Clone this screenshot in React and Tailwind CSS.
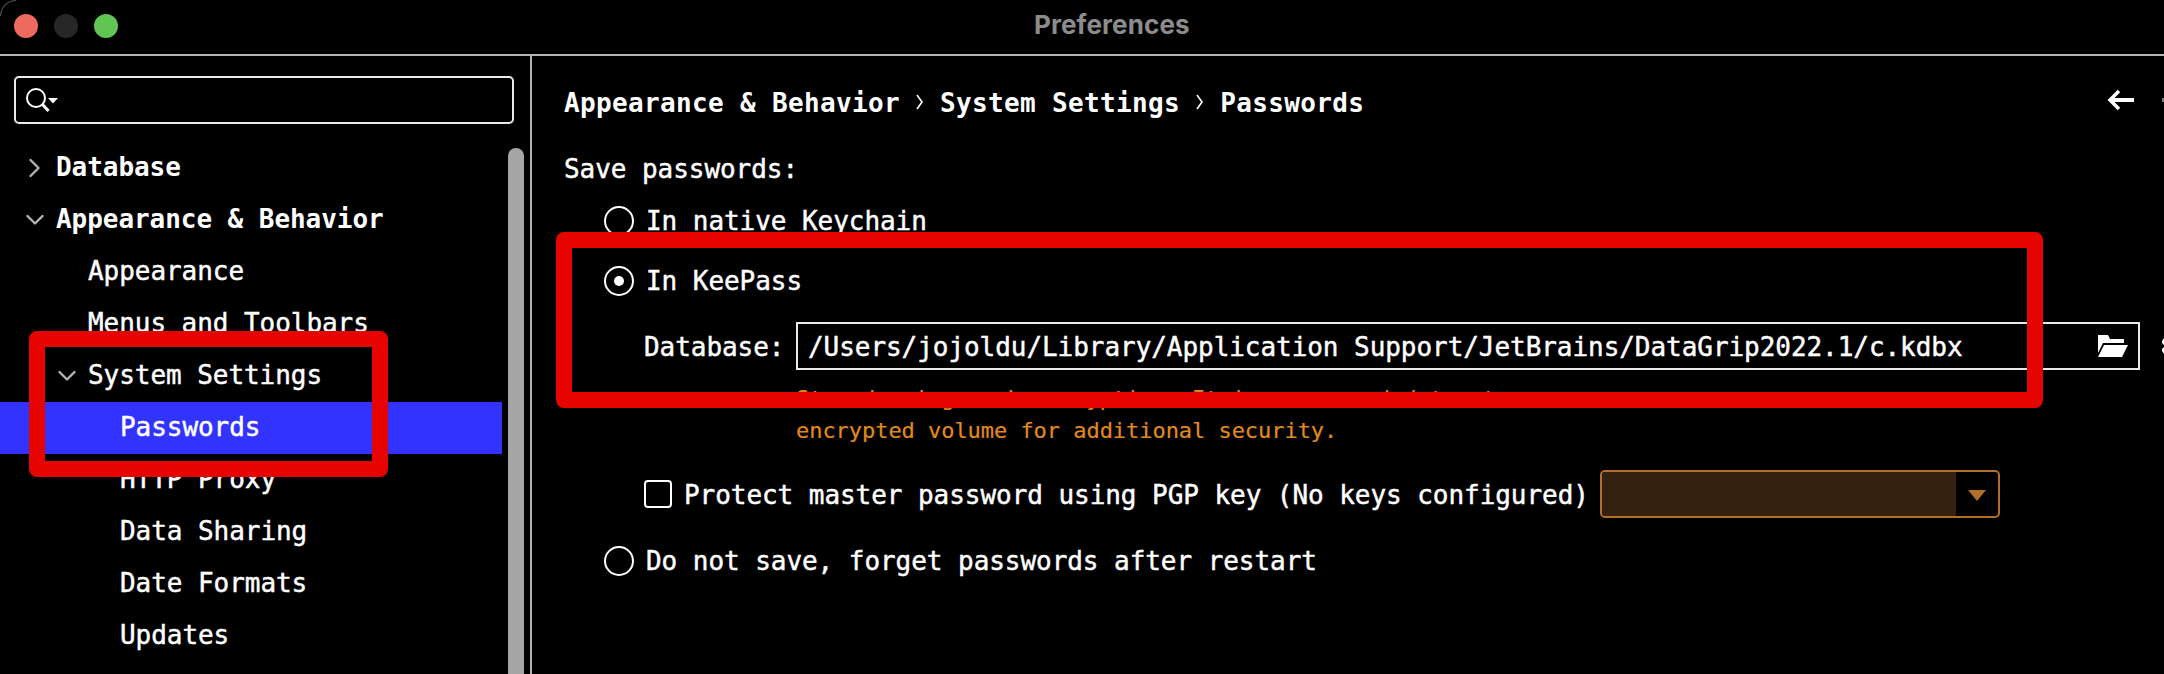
import React from "react";

const mono = "font-['DejaVu_Sans_Mono',monospace] text-[26px] whitespace-pre";
const regular = "tracking-[-0.052px] [-webkit-text-stroke:0.45px_currentColor]";
const crumbText = "relative top-px font-bold tracking-[0.35px] leading-[34px]";

function Chevron({ open }) {
  return (
    <svg width="20" height="20" viewBox="0 0 20 20" fill="none" stroke="#b4b4b4" strokeWidth="2.4" strokeLinecap="round" strokeLinejoin="round" className="shrink-0">
      {open ? <path d="M3.500 6 L11 13.500 L18.500 6" /> : <path d="M6.500 2 L14.500 10 L6.500 18" />}
    </svg>
  );
}

function TreeRow({ label, pad, chevron, bold, selected }) {
  return (
    <div className={`flex h-[52px] w-[502px] shrink-0 items-center ${pad} ${selected ? "bg-[#3333ff]" : ""}`}>
      <div className="flex w-8 shrink-0 items-center">{chevron && <Chevron open={chevron === "open"} />}</div>
      <span className={`${mono} pb-[2px] leading-[50px] ${bold ? "font-bold tracking-[-0.052px]" : regular}`}>{label}</span>
    </div>
  );
}

function Radio({ label, checked }) {
  return (
    <div className="flex h-[30px] items-center">
      <div className="flex size-[30px] shrink-0 items-center justify-center rounded-full border-2 border-white">
        {checked && <div className="size-[10px] rounded-full bg-white" />}
      </div>
      <span className={`${mono} ${regular} ml-3 leading-[30px]`}>{label}</span>
    </div>
  );
}

function Crumb() {
  return (
    <svg width="8" height="16" viewBox="0 0 8 16" fill="none" stroke="#fff" strokeWidth="1.6" className="mx-4">
      <path d="M1 1 L6 8 L1 15" />
    </svg>
  );
}

export default function App() {
  return (
    <div className="relative flex h-[674px] w-[2164px] flex-col overflow-hidden bg-black text-white">
      <header className="flex h-[56px] shrink-0 items-center border-b-2 border-[#b2b2b2] pl-[14px]">
        <div className="flex w-[104px] gap-4 pb-[2px]">
          <div className="size-6 rounded-full bg-[#ed6a5e]" />
          <div className="size-6 rounded-full bg-[#272727]" />
          <div className="size-6 rounded-full bg-[#61c554]" />
        </div>
        <div className="ml-[916px] pb-[4px] font-['Inter',sans-serif] text-[26px] font-bold leading-[40px] tracking-[0.1px] text-[#8c8c8c]">Preferences</div>
      </header>

      <div className="flex min-h-0 flex-1">
        <aside className="flex w-[532px] shrink-0 flex-col border-r-2 border-[#b2b2b2] pt-5">
          <div className="ml-[14px] flex h-[48px] w-[500px] shrink-0 items-center rounded-[5px] border-2 border-[#ebebeb] pl-[10px]">
            <svg width="34" height="26" viewBox="0 0 34 26" fill="none">
              <circle cx="10" cy="11" r="9" stroke="#fff" strokeWidth="2" />
              <path d="M16 17 L22.500 24" stroke="#fff" strokeWidth="3" />
              <path d="M22 11 H32 L27 16.500 Z" fill="#fff" />
            </svg>
          </div>
          <div className="mt-[18px] flex min-h-0 flex-1">
            <nav className="flex w-[508px] flex-col overflow-hidden">
              <TreeRow label="Database" pad="pl-[24px]" chevron="closed" bold />
              <TreeRow label="Appearance & Behavior" pad="pl-[24px]" chevron="open" bold />
              <TreeRow label="Appearance" pad="pl-[56px]" />
              <TreeRow label="Menus and Toolbars" pad="pl-[56px]" />
              <TreeRow label="System Settings" pad="pl-[56px]" chevron="open" />
              <TreeRow label="Passwords" pad="pl-[88px]" selected />
              <TreeRow label="HTTP Proxy" pad="pl-[88px]" />
              <TreeRow label="Data Sharing" pad="pl-[88px]" />
              <TreeRow label="Date Formats" pad="pl-[88px]" />
              <TreeRow label="Updates" pad="pl-[88px]" />
            </nav>
            <div className="mt-[6px] w-4 rounded-t-full bg-[#a6a6a6]" />
          </div>
        </aside>

        <main className="flex min-w-0 flex-1 flex-col overflow-hidden pl-8">
          <div className="mt-[29px] flex h-[34px] shrink-0 items-center">
            <div className="flex flex-1 items-center">
              <span className={`${mono} ${crumbText}`}>Appearance &amp; Behavior</span>
              <Crumb />
              <span className={`${mono} ${crumbText}`}>System Settings</span>
              <Crumb />
              <span className={`${mono} ${crumbText}`}>Passwords</span>
            </div>
            <svg width="28" height="22" viewBox="0 0 28 22" fill="none" stroke="#fff" className="mr-[27px] mb-[4px]">
              <path d="M3 11 H27" strokeWidth="4" />
              <path d="M12 2 L3 11 L12 20" strokeWidth="3.500" />
            </svg>
            <div className="mb-[4px] h-1 w-[2px] bg-[#777]" />
          </div>
          <span className={`${mono} ${regular} mt-[33px] h-[34px] shrink-0 leading-[34px]`}>Save passwords:</span>
          <div className="mt-[20px] flex flex-col pl-10">
            <Radio label="In native Keychain" />
            <div className="mt-[30px]"><Radio label="In KeePass" checked /></div>
            <div className="mt-[26px] flex h-[48px] items-center pl-10">
              <span className={`${mono} ${regular} w-[152px] shrink-0 pt-[2px] leading-[46px]`}>Database:</span>
              <div className="flex h-[48px] w-[1344px] shrink-0 items-center justify-between border-2 border-[#ebebeb] pl-[10px] pr-[10px]">
                <span className={`${mono} ${regular} pt-[2px] leading-[42px]`}>/Users/jojoldu/Library/Application Support/JetBrains/DataGrip2022.1/c.kdbx</span>
                <svg width="30" height="22" viewBox="0 0 30 22" fill="#fff">
                  <path d="M0 0 H10 L12 4 H26 V8 H5 L0 18 Z" />
                  <path d="M6 10 H30 L24 22 H0 Z" />
                </svg>
              </div>
              <svg width="2" height="18" viewBox="0 0 2 18" fill="#fff" className="ml-[22px] shrink-0">
                <path d="M2 1 L0 4 V6 L2 8 Z M2 10 L0 12 V14 L2 17 Z" />
              </svg>
            </div>
            <div className="mt-[13px] w-[760px] pl-[192px] font-['DejaVu_Sans_Mono',monospace] text-[22px] leading-8 tracking-[-0.044px] whitespace-pre text-[#e08a1e] [-webkit-text-stroke:0.2px_currentColor]">
              Stored using weak encryption. It is recommended to store on{"\n"}encrypted volume for additional security.
            </div>
            <div className="mt-[23px] flex h-[48px] items-center pl-10">
              <div className="size-7 shrink-0 rounded-[4px] border-2 border-white" />
              <span className={`${mono} ${regular} ml-3 w-[916px] shrink-0 pt-[2px] leading-[46px]`}>Protect master password using PGP key (No keys configured)</span>
              <div className="flex h-[48px] w-[400px] shrink-0 overflow-hidden rounded-[5px] border-2 border-[#b07027]">
                <div className="flex-1 bg-[#352110]" />
                <div className="flex w-[42px] items-center justify-center">
                  <svg width="18" height="11" viewBox="0 0 18 11" fill="#b07027" className="mt-[2px]"><path d="M0 0 H18 L9 11 Z" /></svg>
                </div>
              </div>
            </div>
            <div className="mt-[28px]"><Radio label="Do not save, forget passwords after restart" /></div>
          </div>
        </main>
      </div>

      <svg width="20" height="20" viewBox="0 0 20 20" fill="none" className="absolute left-0 top-0">
        <path d="M0.500 16 C1 7 7 1 16 0.500" stroke="#4a4a4a" strokeWidth="1.2" />
      </svg>
      <div className="absolute left-[29px] top-[331px] h-[146px] w-[359px] rounded-[8px] border-[16px] border-[#e60400]" />
      <div className="absolute left-[556px] top-[232px] h-[176px] w-[1487px] rounded-[8px] border-[16px] border-[#e60400]" />
    </div>
  );
}
